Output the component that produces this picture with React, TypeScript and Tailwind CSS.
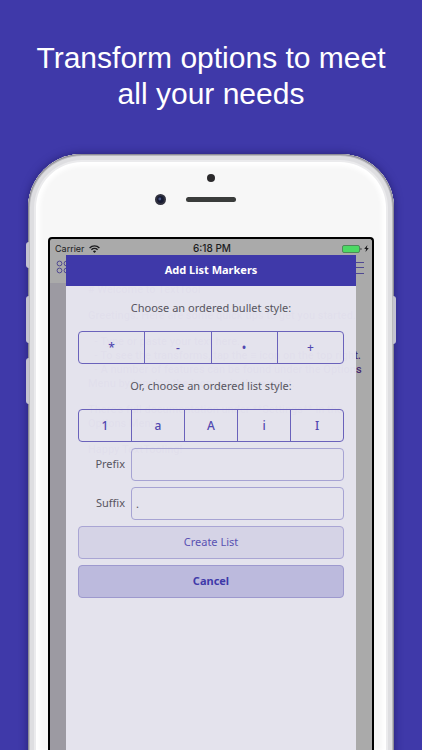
import React, { useState } from 'react';

const bulletStyles = ['*', '-', '•', '+'];
const listStyles = ['1', 'a', 'A', 'i', 'I'];

function StyleGroup({ items, label }: { items: string[]; label: string }) {
    const [active, setActive] = useState('');

    return (
        <div role="group" aria-label={label} className="flex h-[33px] divide-x divide-[#6a62bb] overflow-hidden rounded border border-[#6a62bb]">
            {items.map((item) => (
                <button
                    key={item}
                    type="button"
                    aria-pressed={active === item}
                    onClick={() => setActive(item)}
                    className="flex-1 text-[12px] font-medium text-[#5148b0]"
                >
                    {item}
                </button>
            ))}
        </div>
    );
}

function Field({ id, label, initial }: { id: string; label: string; initial: string }) {
    const [value, setValue] = useState(initial);

    return (
        <div className="flex h-[33px] items-center gap-1.5">
            <label htmlFor={id} className="w-[47px] text-right">{label}</label>
            <input
                id={id}
                value={value}
                onChange={(e) => setValue(e.target.value)}
                className="h-full min-w-0 flex-1 rounded border border-[#a6a3d3] bg-transparent px-1 outline-none"
            />
        </div>
    );
}

function AddListMarkers() {
    return (
        <div className="absolute inset-x-4 top-4 bottom-0 flex flex-col font-['Noto_Sans',sans-serif] text-[11px] text-[#57555f]">
            <h2 className="flex h-[31px] items-center justify-center bg-[#3f39a9] font-bold text-white">Add List Markers</h2>
            <form className="flex flex-1 flex-col gap-1.5 bg-[#e6e5ef]/97 px-3 pt-1.5" onSubmit={(e) => e.preventDefault()}>
                <p className="flex h-[33px] items-center justify-center">Choose an ordered bullet style:</p>
                <StyleGroup items={bulletStyles} label="Bullet style" />
                <p className="flex h-[33px] items-center justify-center">Or, choose an ordered list style:</p>
                <StyleGroup items={listStyles} label="List style" />
                <Field id="prefix" label="Prefix" initial="" />
                <Field id="suffix" label="Suffix" initial="." />
                <button type="submit" className="h-[33px] rounded border border-[#a9a5d4] bg-[#d5d3e6] text-[11px] text-[#5a52b3]">Create List</button>
                <button type="button" className="h-[33px] rounded border border-[#9d99ce] bg-[#bcbadd] text-[11px] font-bold text-[#3f39a9]">Cancel</button>
            </form>
        </div>
    );
}

function StatusBar() {
    return (
        <div className="grid h-4 grid-cols-3 items-center pt-0.5 pr-[3px] pl-[5px] text-[9px] text-[#1c1c1e]">
            <div className="flex items-center gap-1">
                Carrier
                <svg width="11" height="8" viewBox="0 0 11 8" fill="none" stroke="#1c1c1e" strokeWidth="1.4">
                    <path d="M0.6 2.9a7 7 0 0 1 9.8 0M2.4 4.8a4.4 4.4 0 0 1 6.2 0" />
                    <path d="M5.5 7.9L3.9 6.2a2.3 2.3 0 0 1 3.2 0z" fill="#1c1c1e" stroke="none" />
                </svg>
            </div>
            <span className="text-center text-[10px] font-medium">6:18 PM</span>
            <div className="flex items-center justify-end gap-0.5">
                <svg width="20" height="8" viewBox="0 0 20 8">
                    <rect x="0.5" y="0.5" width="17" height="7" rx="1.5" fill="#4cd964" stroke="#4f8a5a" />
                    <path d="M18.6 2.7v2.6c1.2-.4 1.2-2.2 0-2.6z" fill="#1c1c1e" />
                </svg>
                <svg width="5" height="7" viewBox="0 0 5 7" fill="#1c1c1e">
                    <path d="M3.4 0L0.2 3.9h1.9L1.5 7 4.8 2.9H2.8z" />
                </svg>
            </div>
        </div>
    );
}

function Editor() {
    return (
        <div className="flex-1 font-['Roboto',sans-serif]">
            <div className="flex h-7 items-start justify-between px-[6px] pt-[5px]">
                <button type="button" aria-label="Documents">
                    <svg width="18" height="14" viewBox="0 0 18 14" fill="none" stroke="#4f4892" strokeWidth="1">
                        <circle cx="3.5" cy="3.5" r="2.4" />
                        <circle cx="10.5" cy="3.5" r="2.4" />
                        <circle cx="3.5" cy="10.5" r="2.4" />
                        <circle cx="10.5" cy="10.5" r="2.4" />
                    </svg>
                </button>
                <button type="button" aria-label="Transforms" className="mr-[2px]">
                    <svg width="16" height="14" viewBox="0 0 16 14" stroke="#4f4892" strokeWidth="1">
                        <path d="M0 2.5h16M0 7.5h16M0 13.5h16" />
                    </svg>
                </button>
            </div>
            <div className="flex">
                <div className="h-[480px] w-4 bg-[#9c9aa2]" />
                <div className="flex flex-col gap-3 pl-[22px] text-[11px] leading-[14px] font-medium whitespace-nowrap text-[#45286f]">
                    <p># Welcome to TextTool</p>
                    <p>Greetings. Here are some quick tips to get you started.</p>
                    <div>
                        <ul className="pl-1.5">
                            <li>- Type or paste your text here.</li>
                            <li>- To see the transforms, tap the ≡ icon on the top right.</li>
                            <li>- A number of features can be found under the Options</li>
                        </ul>
                        <p>Menu by tapping the icon, or in the export.</p>
                    </div>
                    <p>There's full documentation under **Settings** in the<br />Options Menu.</p>
                    <p>Happy TextTooling!</p>
                </div>
            </div>
        </div>
    );
}

export default function App() {
    return (
        <main className="flex h-screen min-h-[600px] flex-col overflow-hidden bg-[#3f39a9] pt-10">
            <h1 className="mx-auto max-w-[360px] text-center font-['Liberation_Sans',Arial,sans-serif] text-[30px] leading-9 text-white">
                Transform options to meet all your needs
            </h1>

            {/* Phone */}
            <div className="relative mx-7 mt-[42px] flex flex-1 flex-col rounded-t-[54px] bg-[#f7f7f7] px-5 pt-5 shadow-[0_0_8px_rgba(20,15,80,0.6),inset_0_0_0_1px_#8d8c96,inset_0_0_0_2px_#b9b9be,inset_0_0_0_6px_#dedee1,inset_0_0_0_8px_#ebebed,inset_0_0_4px_12px_#ffffff]">
                {/* Side buttons */}
                <span className="absolute top-[88px] -left-0.5 h-[26px] w-[3px] rounded-l-sm bg-[#c4c3d0]" />
                <span className="absolute top-[142px] -left-0.5 h-[47px] w-[3px] rounded-l-sm bg-[#c4c3d0]" />
                <span className="absolute top-[204px] -left-0.5 h-[46px] w-[3px] rounded-l-sm bg-[#c4c3d0]" />
                <span className="absolute top-[142px] -right-0.5 h-[48px] w-[3px] rounded-r-sm bg-[#c4c3d0]" />

                <span className="mx-auto h-2 w-2 rounded-full bg-[#2b2a2c]" />
                <div className="mt-3 mb-8 grid grid-cols-[1fr_auto_1fr] items-center">
                    <svg width="11" height="11" viewBox="0 0 11 11" className="mr-5 justify-self-end">
                        <circle cx="5.5" cy="5.5" r="5.5" fill="#32323f" />
                        <circle cx="5.5" cy="5.5" r="3.4" fill="#171b33" />
                        <circle cx="4.8" cy="5" r="1.4" fill="#4a5684" />
                    </svg>
                    <span className="h-[5px] w-[50px] rounded-full bg-[#3a3c3b]" />
                </div>

                {/* Screen */}
                <div className="relative flex flex-1 flex-col overflow-hidden rounded-t-sm border-2 border-b-0 border-black bg-[#aaaaaa] font-['Inter',sans-serif]">
                    <StatusBar />
                    <Editor />
                    <AddListMarkers />
                </div>
            </div>
        </main>
    );
}
